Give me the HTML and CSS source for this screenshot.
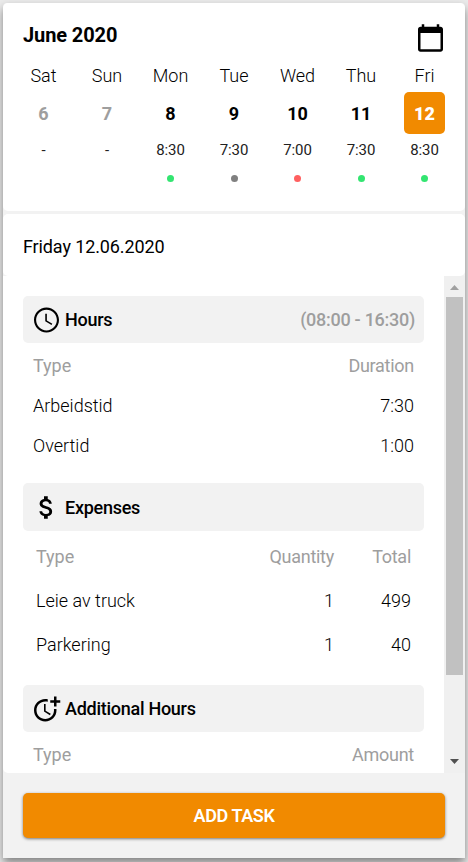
FILE: index.html
```html
<!DOCTYPE html>
<html lang="en">
<head>
<meta charset="utf-8">
<title>June 2020</title>
<link rel="stylesheet" href="styles.css">
</head>
<body>
<main class="sheet">
  <section class="calendar">
    <header class="calendar-head">
      <h1>June 2020</h1>
      <svg class="icon" viewBox="-.4 0 24 24"><path d="M20 3h-1V1h-2v2H7V1H5v2H4c-1.1 0-2 .9-2 2v16c0 1.1.9 2 2 2h16c1.1 0 2-.9 2-2V5c0-1.1-.9-2-2-2zm0 18H4V8h16v13z"/></svg>
    </header>
    <div class="week">
      <div class="day muted"><span class="name">Sat</span><span class="num">6</span><span class="time">-</span></div>
      <div class="day muted"><span class="name">Sun</span><span class="num">7</span><span class="time">-</span></div>
      <div class="day"><span class="name">Mon</span><span class="num">8</span><span class="time">8:30</span><i class="dot green"></i></div>
      <div class="day"><span class="name">Tue</span><span class="num">9</span><span class="time">7:30</span><i class="dot gray"></i></div>
      <div class="day"><span class="name">Wed</span><span class="num">10</span><span class="time">7:00</span><i class="dot red"></i></div>
      <div class="day"><span class="name">Thu</span><span class="num">11</span><span class="time">7:30</span><i class="dot green"></i></div>
      <div class="day selected"><span class="name">Fri</span><span class="num">12</span><span class="time">8:30</span><i class="dot green"></i></div>
    </div>
  </section>
  <section class="date">Friday 12.06.2020</section>
  <section class="details">
    <div class="content">
      <div class="group">
        <h2><svg class="icon" viewBox="-.4 0 24 24"><path d="M11.99 2C6.47 2 2 6.48 2 12s4.47 10 9.99 10C17.52 22 22 17.52 22 12S17.52 2 11.99 2zM12 20.3c-4.6 0-8.3-3.7-8.3-8.3s3.7-8.3 8.3-8.3 8.3 3.7 8.3 8.3-3.7 8.3-8.3 8.3zm.3-13.3H11v6l5 3 .65-1.1-4.35-2.6z"/></svg>Hours<span class="range">(08:00 - 16:30)</span></h2>
        <div class="rows">
          <div class="row labels"><span>Type</span><span>Duration</span></div>
          <div class="row"><span>Arbeidstid</span><span>7:30</span></div>
          <div class="row"><span>Overtid</span><span>1:00</span></div>
        </div>
      </div>
      <div class="group expenses">
        <h2><svg class="icon" viewBox="-.4 .4 24 24"><path d="M11.8 10.9c-2.27-.59-3-1.2-3-2.15 0-1.09 1.01-1.85 2.7-1.85 1.78 0 2.44.85 2.5 2.1h2.21c-.07-1.72-1.12-3.3-3.21-3.81V3h-3v2.16c-1.94.42-3.5 1.68-3.5 3.61 0 2.31 1.91 3.46 4.7 4.13 2.5.6 3 1.48 3 2.41 0 .69-.49 1.79-2.7 1.79-2.06 0-2.87-.92-2.98-2.1h-2.2c.12 2.19 1.76 3.42 3.68 3.83V21h3v-2.15c1.95-.37 3.5-1.5 3.5-3.55 0-2.84-2.43-3.81-4.7-4.4z"/></svg>Expenses</h2>
        <div class="rows">
          <div class="row labels"><span>Type</span><span>Quantity</span><span>Total</span></div>
          <div class="row"><span>Leie av truck</span><span>1</span><span>499</span></div>
          <div class="row"><span>Parkering</span><span>1</span><span>40</span></div>
        </div>
      </div>
      <div class="group">
        <h2><svg class="icon" viewBox="-.4 0 24 24"><path d="M10 8v6l4.7 2.9.7-1.1-4.1-2.5V8z"/><path d="M17.92 12c.05.33.08.66.08 1 0 3.9-3.1 7-7 7s-7-3.1-7-7 3.1-7 7-7c.7 0 1.37.1 2 .29V4.23c-.64-.15-1.31-.23-2-.23-5 0-9 4-9 9s4 9 9 9 9-4 9-9c0-.34-.02-.67-.06-1h-2.02z"/><path d="M20 5V2h-2v3h-3v2h3v3h2V7h3V5z"/></svg>Additional Hours</h2>
        <div class="rows">
          <div class="row labels"><span>Type</span><span>Amount</span></div>
        </div>
      </div>
    </div>
    <div class="scrollbar">
      <svg class="arrow up" viewBox="0 0 9 5"><path d="M0 5 4.5 0 9 5z"/></svg>
      <div class="thumb"></div>
      <svg class="arrow down" viewBox="0 0 9 5"><path d="M0 0 4.5 5 9 0z"/></svg>
    </div>
  </section>
  <footer><button>ADD TASK</button></footer>
</main>
</body>
</html>
```
FILE: styles.css
```css
* { box-sizing: border-box; }
body {
  margin: 0;
  height: 862px;
  padding: 3px;
  overflow: hidden;
  background: #ebebeb;
  font: 300 18px/20px Roboto, sans-serif;
  color: #000;
}
.sheet {
  display: flex;
  flex-direction: column;
  height: 855px;
  background: #f2f2f2;
  border-radius: 4px 4px 0 0;
  box-shadow: 0 5px 10px rgba(0, 0, 0, .45);
}
.icon { width: 30px; height: 30px; flex: none; }
.calendar {
  height: 208px;
  padding: 20px 20px 0;
  margin-bottom: 3px;
  background: #fff;
  border-radius: 5px;
}
.calendar-head { display: flex; justify-content: space-between; height: 42px; }
h1 { margin: 0; font-size: 20px; line-height: 24px; font-weight: 700; letter-spacing: -.1px; }
.week { display: flex; justify-content: space-between; }
.day { width: 41px; display: flex; flex-direction: column; align-items: center; }
.name { line-height: 22px; margin-bottom: 5px; }
.num { width: 41px; height: 42px; line-height: 44px; text-align: center; font-weight: 700; border-radius: 5px; }
.muted .num { color: #9e9e9e; }
.selected .num { background: #f18a00; color: #fff; font-weight: 900; }
.time { font-size: 15px; line-height: 20px; margin-top: 6px; font-weight: 400; letter-spacing: -.1px; color: #222; }
.dot { width: 7px; height: 7px; margin-top: 14.5px; border-radius: 50%; }
.green { background: #33e571; }
.gray { background: #808080; }
.red { background: #ff6060; }
.date { height: 62px; padding: 23px 20px 0; background: #fff; border-radius: 5px; font-weight: 400; letter-spacing: -.12px; }
.details { display: flex; height: 497px; overflow: hidden; background: #fff; border-radius: 0 0 0 5px; }
.content { flex: 1; padding: 20px 20px 0; }
.group { height: 187px; }
h2 {
  display: flex;
  align-items: center;
  height: 47px;
  margin: 0;
  padding: 1px 9px 0 8px;
  gap: 4px;
  background: #f2f2f2;
  border-radius: 5px;
  font-size: 18px;
  font-weight: 500;
  letter-spacing: -.27px;
}
.range { margin-left: auto; color: #9e9e9e; }
.rows { padding: 3px 10px 0; }
.row { display: flex; justify-content: space-between; line-height: 40px; }
.labels { color: #9e9e9e; font-weight: 400; }
.labels span + span { letter-spacing: -.27px; }
.expenses { height: 202px; }
.expenses h2 { height: 48px; }
.expenses .rows { padding: 4px 13px 0; }
.expenses .row { display: grid; grid-template-columns: 1fr 90px 77px; line-height: 44px; }
.expenses .row span + span { text-align: right; }
.scrollbar { width: 21px; display: flex; flex-direction: column; align-items: center; background: #f0f0f0; padding: 9px 0; }
.arrow { width: 9px; height: 5px; }
.up { fill: #a0a0a0; }
.down { margin-top: auto; fill: #505050; }
.thumb { width: 17px; height: 378px; margin-top: 7px; background: #c1c1c1; }
footer { flex: 1; padding: 20px; }
button {
  display: block;
  width: 100%;
  height: 45px;
  padding: 0;
  border: 0;
  border-radius: 5px;
  background: #f18a00;
  color: #fff;
  font: 600 18px/45px Roboto, sans-serif;
  letter-spacing: -.4px;
  box-shadow: 0 1px 3px rgba(0, 0, 0, .5);
}
```
